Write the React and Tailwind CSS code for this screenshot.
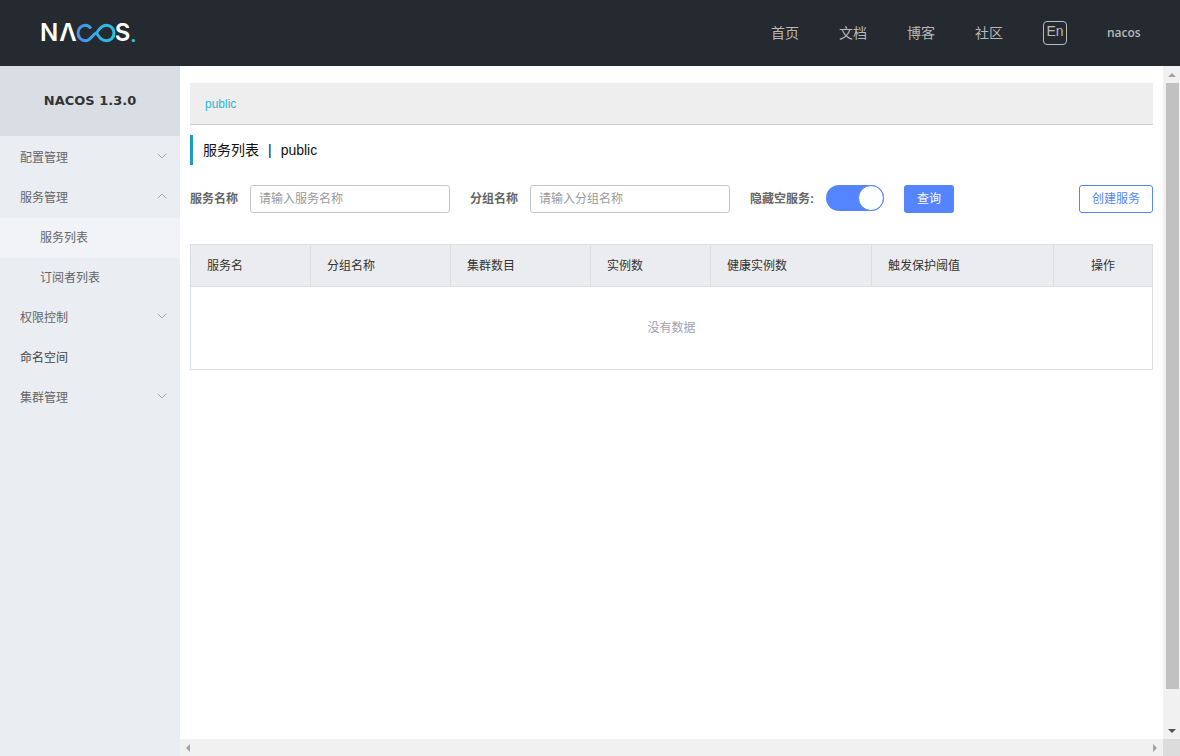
import { ChevronDown, ChevronUp } from "lucide-react";

const columns = [
  { label: "服务名", width: "w-[120px]" },
  { label: "分组名称", width: "w-[140px]" },
  { label: "集群数目", width: "w-[140px]" },
  { label: "实例数", width: "w-[120px]" },
  { label: "健康实例数", width: "w-[161px]" },
  { label: "触发保护阈值", width: "w-[182px]" },
];

function Logo() {
  return (
    <div className="flex items-center text-white font-['Inter',sans-serif] font-semibold text-[24px] leading-none" aria-label="NACOS.">
      <span>N</span>
      <span className="ml-[1px]">Λ</span>
      <svg width="40" height="20" viewBox="0 0 40 20" fill="none" className="-mx-[1px]">
        <defs>
          <linearGradient id="mark" x1="0" x2="1" y1="0" y2="0">
            <stop offset="0" stopColor="#4a8ff0" />
            <stop offset="1" stopColor="#27c5e0" />
          </linearGradient>
        </defs>
        <path
          d="M15 5.5C13.5 3.4 11.500 2.300 9.500 2.300 5.200 2.300 2 5.600 2 10s3.200 7.700 7.500 7.700c5.500 0 8-7.700 11-7.700m0 0c3-4.800 6-7.700 10-7.700C34.800 2.300 38 5.600 38 10s-3.200 7.700-7.500 7.700c-5 0-7-3-10-7.700"
          stroke="url(#mark)"
          strokeWidth="3"
        />
      </svg>
      <span>S</span>
      <span className="text-[#27c5e0] text-[20px] self-end">.</span>
    </div>
  );
}

function Header() {
  return (
    <header className="h-[66px] shrink-0 bg-[#252a31] flex items-center justify-between pl-10 pr-10">
      <Logo />
      <nav className="flex items-center gap-10 text-sm text-[#b8b8b8]">
        <a>首页</a>
        <a>文档</a>
        <a>博客</a>
        <a>社区</a>
        <span className="w-6 h-6 flex items-center justify-center border border-[#bbbbbb] rounded-sm leading-none pb-1">En</span>
        <span className="text-xs font-['Open_Sans',sans-serif] font-semibold w-[33px]">nacos</span>
      </nav>
    </header>
  );
}

function MenuItem({ label, open, arrow, active, sub, dark }) {
  return (
    <div
      className={`h-10 flex items-center justify-between pr-[10px] text-xs ${sub ? "pl-10" : "pl-5"} ${active ? "bg-[#f2f3f7]" : ""} ${dark ? "text-[#444444]" : "text-[#666666]"}`}
    >
      <span>{label}</span>
      {arrow && (
        <span className="text-[#999999] -mt-1">
          {open ? <ChevronUp size={16} strokeWidth={1.3} /> : <ChevronDown size={16} strokeWidth={1.3} />}
        </span>
      )}
    </div>
  );
}

function Sidebar() {
  return (
    <aside className="w-[180px] shrink-0 bg-[#eaedf1]">
      <div className="h-[70px] bg-[#d9dee4] flex items-center justify-center font-['DejaVu_Sans',sans-serif] font-bold text-[13px] text-[#333333]">
        NACOS 1.3.0
      </div>
      <div className="pt-[2px]">
        <MenuItem label="配置管理" arrow />
        <MenuItem label="服务管理" arrow open />
        <MenuItem label="服务列表" sub active />
        <MenuItem label="订阅者列表" sub />
        <MenuItem label="权限控制" arrow />
        <MenuItem label="命名空间" dark />
        <MenuItem label="集群管理" arrow />
      </div>
    </aside>
  );
}

function Field({ label, placeholder }) {
  return (
    <div className="flex items-center">
      <label className="text-xs font-bold text-[#666666] w-[60px]">{label}</label>
      <input
        placeholder={placeholder}
        className="w-[200px] h-7 px-2 text-xs text-[#333333] border border-[#c4c6cf] rounded-[3px] outline-none placeholder:text-[#999999]"
      />
    </div>
  );
}

function SearchRow() {
  return (
    <div className="mt-5 flex items-start">
      <div className="flex gap-5 items-center">
        <Field label="服务名称" placeholder="请输入服务名称" />
        <Field label="分组名称" placeholder="请输入分组名称" />
      </div>
      <div className="ml-5 h-7 flex items-center text-xs font-bold text-[#666666] w-[76px]">隐藏空服务:</div>
      <div className="w-[58px] h-[26px] rounded-full bg-[#5584ff] flex justify-end">
        <div className="w-[26px] h-[26px] rounded-full bg-white border border-[#5584ff]" />
      </div>
      <button className="ml-5 w-[50px] h-7 rounded-[3px] bg-[#5584ff] text-white text-xs">查询</button>
      <button className="ml-auto w-[74px] h-7 rounded-[3px] bg-white border border-[#5584ff] text-[#5584ff] text-xs">创建服务</button>
    </div>
  );
}

function ServiceTable() {
  return (
    <div className="mt-[31px] border border-[#dcdee3]">
      <div className="h-[42px] flex bg-[#ebecf0] border-b border-[#dcdee3] text-xs text-[#333333]">
        {columns.map((c, i) => (
          <div
            key={c.label}
            className={`${c.width} ${i === 0 ? "w-[119px]" : ""} px-4 flex items-center border-r border-[#dcdee3]`}
          >
            {c.label}
          </div>
        ))}
        <div className="flex-1 flex items-center justify-center">操作</div>
      </div>
      <div className="h-[82px] flex items-center justify-center text-xs text-[#a0a2ad]">没有数据</div>
    </div>
  );
}

function Arrow({ points, fill }) {
  return (
    <svg width="8" height="8" viewBox="0 0 8 8">
      <polygon points={points} fill={fill} />
    </svg>
  );
}

export default function App() {
  return (
    <div className="h-screen flex flex-col overflow-hidden bg-white font-['Liberation_Sans','Noto_Sans_CJK_SC',sans-serif]">
      <Header />
      <div className="flex-1 flex min-h-0">
        <Sidebar />
        <div className="flex-1 flex flex-col min-w-0">
          <div className="flex-1 flex min-h-0">
            <main className="flex-1 min-w-0 px-[10px] pt-[17px]">
              <div className="h-[42px] bg-[#eeeeee] border-b border-[#cccccc] flex items-center px-[15px] text-xs text-[#2bb7d0]">
                public
              </div>
              <h1 className="mt-[10px] h-[30px] border-l-[3px] border-[#209bc4] pl-[10px] flex items-center gap-[9px] text-sm font-normal text-[#111111]">
                <span>服务列表</span>
                <span>|</span>
                <span>public</span>
              </h1>
              <SearchRow />
              <ServiceTable />
            </main>
            {/* vertical scrollbar */}
            <div className="w-[17px] shrink-0 bg-[#f1f1f1] flex flex-col items-center">
              <div className="h-[17px] w-full flex items-center justify-center">
                <Arrow points="4,2 8,6 0,6" fill="#a3a3a3" />
              </div>
              <div className="w-[13px] h-[606px] bg-[#c1c1c1] ml-[1px]" />
              <div className="flex-1" />
              <div className="h-[17px] w-full flex items-center justify-center">
                <Arrow points="0,2 8,2 4,6" fill="#505050" />
              </div>
            </div>
          </div>
          {/* horizontal scrollbar */}
          <div className="h-[17px] shrink-0 flex bg-[#f1f1f1]">
            <div className="flex-1 flex items-center justify-between px-1">
              <Arrow points="2,4 6,0 6,8" fill="#a3a3a3" />
              <Arrow points="2,0 6,4 2,8" fill="#a3a3a3" />
            </div>
            <div className="w-[17px] bg-[#dcdcdc]" />
          </div>
        </div>
      </div>
    </div>
  );
}
